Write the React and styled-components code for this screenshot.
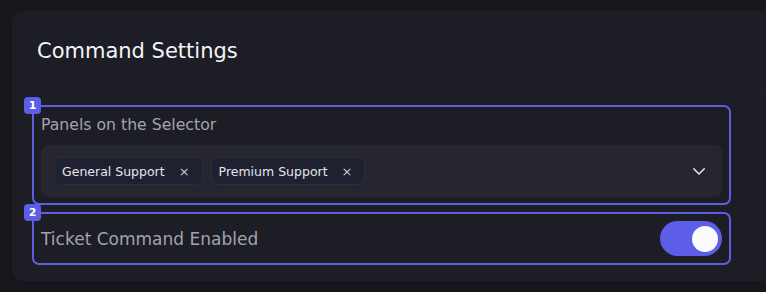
import React from "react";
import styled, { createGlobalStyle } from "styled-components";

const Global = createGlobalStyle`
  html, body {
    margin: 0;
    background: #16171d;
    font-family: "DejaVu Sans", "Open Sans", sans-serif;
    overflow: hidden;
  }
  body {
    padding: 11px 0 0 12px;
  }
`;

const Card = styled.div`
  width: 790px;
  height: 270px;
  background: #1c1d25;
  border-radius: 10px;
  box-sizing: border-box;
`;

const Header = styled.div`
  height: 80px;
  padding: 0 0 0 25px;
  display: flex;
  align-items: center;
  border-bottom: 1px solid #20212a;
  box-sizing: border-box;
`;

const Title = styled.h2`
  margin: 0;
  font-size: 21px;
  line-height: 26px;
  font-weight: 400;
  color: #f4f4f8;
`;

const Body = styled.div`
  padding: 14px 0 0 20px;
  display: flex;
  flex-direction: column;
  gap: 7px;
`;

const Section = styled.div`
  position: relative;
  width: 699px;
  box-sizing: border-box;
  border: 2px solid #5d5ee0;
  border-radius: 7px;
  padding: ${(p) => p.$pad};
  display: flex;
  flex-direction: ${(p) => (p.$row ? "row" : "column")};
  align-items: ${(p) => (p.$row ? "center" : "stretch")};
  justify-content: space-between;
`;

const Badge = styled.span`
  position: absolute;
  top: -10px;
  left: -10px;
  width: 17px;
  height: 17px;
  border-radius: 4px;
  background: #5d5ee8;
  color: #fff;
  font-size: 11px;
  font-weight: 700;
  display: flex;
  align-items: center;
  justify-content: center;
`;

const Label = styled.div`
  color: #a3a3ad;
  font-size: ${(p) => p.$size || 15.7}px;
  line-height: 20px;
`;

const Select = styled.div`
  margin-top: 10px;
  height: 52px;
  background: #25262f;
  border-radius: 7px;
  display: flex;
  align-items: center;
  padding: 0 14px 0 13px;
  gap: 8px;
`;

const Chip = styled.div`
  height: 28px;
  display: flex;
  align-items: center;
  gap: 14px;
  padding: 0 12px 0 7px;
  background: #1f2030;
  border: 1px solid #2c2d3a;
  border-radius: 7px;
  box-sizing: border-box;
  color: #e6e6ee;
  font-size: 12.5px;
`;

const Remove = styled.span`
  color: #c8c8d0;
  font-size: 13px;
  line-height: 1;
`;

const Spacer = styled.div`
  flex: 1;
`;

const Toggle = styled.div`
  width: 62px;
  height: 35px;
  border-radius: 18px;
  background: #5d5ee8;
  display: flex;
  align-items: center;
  justify-content: flex-end;
  padding-right: 4px;
  box-sizing: border-box;
`;

const Knob = styled.div`
  width: 26px;
  height: 26px;
  border-radius: 50%;
  background: #fafaff;
`;

const Chevron = () => (
  <svg width="18" height="18" viewBox="0 0 24 24" fill="none" stroke="#e8e8ee" strokeWidth="2" strokeLinecap="round" strokeLinejoin="round">
    <path d="M5 9l7 7 7-7" />
  </svg>
);

export default function App() {
  return (
    <>
      <Global />
      <Card>
        <Header>
          <Title>Command Settings</Title>
        </Header>
        <Body>
          <Section $pad="8px 7px 6px 7px">
            <Badge>1</Badge>
            <Label>Panels on the Selector</Label>
            <Select>
              <Chip>
                General Support <Remove>×</Remove>
              </Chip>
              <Chip>
                Premium Support <Remove>×</Remove>
              </Chip>
              <Spacer />
              <Chevron />
            </Select>
          </Section>
          <Section $row $pad="7px 7px 7px 7px">
            <Badge>2</Badge>
            <Label $size={17}>Ticket Command Enabled</Label>
            <Toggle>
              <Knob />
            </Toggle>
          </Section>
        </Body>
      </Card>
    </>
  );
}
